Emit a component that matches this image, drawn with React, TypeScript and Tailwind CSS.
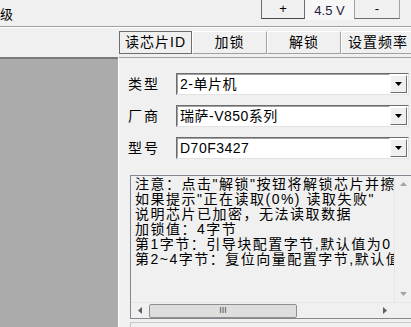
const font = { fontFamily: '"Liberation Sans", "Noto Sans CJK SC", sans-serif' };

function Combo({ value }: { value: string }) {
  return (
    <div className="flex h-[22px] w-[233px] border border-t-[#6d6d6d] border-l-[#6d6d6d] border-r-[#e3e3e3] border-b-[#e3e3e3] bg-white">
      <div className="flex flex-1 items-center border border-t-[#a0a0a0] border-l-[#a0a0a0] border-r-white border-b-white pl-[2px] text-[14px] leading-none tracking-[0.5px] text-black">
        {value}
      </div>
      <div className="my-[1px] mr-[1px] flex w-[17px] items-center justify-center border border-t-white border-l-white border-r-[#6d6d6d] border-b-[#6d6d6d] bg-[#f0f0f0]">
        <svg width="7" height="4" viewBox="0 0 7 4"><path d="M0 0h7L3.5 4z" fill="#000" /></svg>
      </div>
    </div>
  );
}

function ToolButton({ label, w, dark }: { label: string; w: string; dark?: boolean }) {
  return (
    <div
      className={`flex h-[23px] ${w} shrink-0 items-center justify-center border ${
        dark ? 'border-[#6d6d6d]' : 'border-t-white border-l-white border-r-[#a0a0a0] border-b-[#a0a0a0]'
      } bg-[#f0f0f0] text-[14px] tracking-[1px] text-black`}
    >
      {label}
    </div>
  );
}

// the last characters fall outside the box, as in the original window
const lines = [
  '注意：点击"解锁"按钮将解锁芯片并擦',
  '如果提示"正在读取(0%) 读取失败"',
  '说明芯片已加密，无法读取数据',
  '加锁值：4字节',
  '第1字节：引导块配置字节,默认值为0',
  '第2~4字节：复位向量配置字节,默认值',
];

export default function App() {
  return (
    <div className="flex h-[327px] w-[411px] flex-col overflow-hidden bg-[#f0f0f0]" style={font}>
      {/* top strip */}
      <div className="flex h-[26px] shrink-0 items-start">
        <div className="mt-[5px] text-[13px] text-black">级</div>
        <div className="ml-auto mr-[11px] flex items-start">
          <div className="flex h-[19px] w-[44px] items-center justify-center border-x border-b border-x-[#6d6d6d] border-b-[#4a4a4a] bg-[#f0f0f0] text-[13px]">
            +
          </div>
          <div className="flex h-[20px] w-[49px] items-start justify-center bg-[#f7f7f7] pt-[1px] text-[13px] text-[#1c1c3c]">
            4.5 V
          </div>
          <div className="flex h-[19px] w-[46px] items-center justify-center border-x border-b border-x-[#a0a0a0] border-b-[#6d6d6d] bg-[#f0f0f0] text-[13px]">
            -
          </div>
        </div>
      </div>
      <div className="h-px shrink-0 bg-[#a0a0a0]" />
      <div className="h-px shrink-0 bg-white" />

      {/* toolbar */}
      <div className="flex h-[29px] shrink-0 items-start pt-[3px] pl-[119px]">
        <ToolButton label="读芯片ID" w="w-[73px]" dark />
        <ToolButton label="加锁" w="w-[75px]" />
        <ToolButton label="解锁" w="w-[74px]" />
        <ToolButton label="设置频率" w="w-[74px]" />
      </div>

      <div className="flex min-h-0 flex-1">
        {/* left grey panel */}
        <div className="w-[118px] shrink-0 border-t-2 border-t-[#7a7a7a] bg-[#ababab]" />
        <div className="w-px shrink-0 bg-white" />

        {/* right panel */}
        <div className="flex min-w-0 flex-1 flex-col border-t border-t-[#a0a0a0] pl-[9px] pt-[15px]">
          <div className="flex shrink-0 flex-col gap-[10px]">
            {[
              ['类型', '2-单片机'],
              ['厂商', '瑞萨-V850系列'],
              ['型号', 'D70F3427'],
            ].map(([k, v]) => (
              <div key={k} className="flex h-[22px] items-center">
                <div className="w-[48px] text-[14px] tracking-[2px] text-black">{k}</div>
                <Combo value={v} />
              </div>
            ))}
          </div>

          {/* text area */}
          <div className="ml-[2px] mt-[16px] flex h-[144px] w-[282px] shrink-0 flex-col border border-[#828790] bg-[#f0f0f0]">
            <div className="flex h-[126px] shrink-0">
              <div className="min-w-0 flex-1 overflow-hidden pl-[4px] pt-[1px]">
                {lines.map((l) => (
                  <div key={l} className="overflow-hidden whitespace-nowrap text-[14px] leading-[15px] tracking-[1.5px] text-black">
                    {l}
                  </div>
                ))}
              </div>
              <div className="flex w-[17px] shrink-0 flex-col items-center justify-between border-l border-l-[#e6e6e6] bg-[#f0f0f0] py-[6px]">
                <svg width="7" height="4" viewBox="0 0 7 4"><path d="M0 4h7L3.5 0z" fill="#a3a3a3" /></svg>
                <svg width="7" height="4" viewBox="0 0 7 4"><path d="M0 0h7L3.5 4z" fill="#a3a3a3" /></svg>
              </div>
            </div>
            <div className="flex h-[16px] shrink-0 border-t border-t-[#e6e6e6] bg-[#f0f0f0]">
              <div className="flex min-w-0 flex-1 items-center">
                <div className="flex w-[18px] shrink-0 justify-center">
                  <svg width="4" height="7" viewBox="0 0 4 7"><path d="M4 0v7L0 3.5z" fill="#606060" /></svg>
                </div>
                <div className="flex h-[14px] w-[148px] shrink-0 items-center justify-center rounded-[2px] border border-[#8f8f8f] bg-[#dedede] text-[9px] leading-none text-[#4a4a4a]">
                  III
                </div>
                <div className="ml-auto flex w-[18px] shrink-0 justify-center">
                  <svg width="4" height="7" viewBox="0 0 4 7"><path d="M0 0v7L4 3.5z" fill="#606060" /></svg>
                </div>
              </div>
              <div className="w-[17px] shrink-0" />
            </div>
          </div>

          <div className="ml-[2px] mt-[3px] h-[20px] w-[282px] shrink-0 border border-[#c8c8c8] bg-[#f0f0f0]" />
        </div>
      </div>
    </div>
  );
}
